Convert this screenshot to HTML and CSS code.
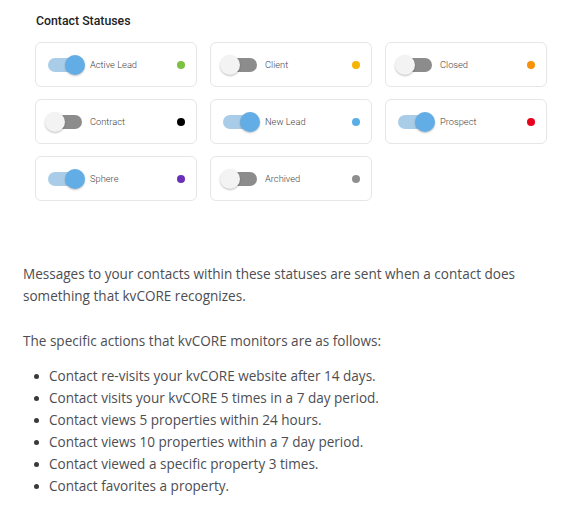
FILE: index.html
```html
<!DOCTYPE html>
<html>
<head>
<meta charset="utf-8">
<link rel="stylesheet" href="styles.css">
</head>
<body>
<div class="page">
  <section class="statuses">
    <h2 class="title">Contact Statuses</h2>
    <div class="grid">
      <div class="card"><span class="toggle on"><span class="knob"></span></span><span class="label">Active Lead</span><span class="dot" style="background:#7dc143"></span></div>
      <div class="card"><span class="toggle"><span class="knob"></span></span><span class="label">Client</span><span class="dot" style="background:#f5b400"></span></div>
      <div class="card"><span class="toggle"><span class="knob"></span></span><span class="label">Closed</span><span class="dot" style="background:#f7930a"></span></div>
      <div class="card"><span class="toggle"><span class="knob"></span></span><span class="label">Contract</span><span class="dot" style="background:#000000"></span></div>
      <div class="card"><span class="toggle on"><span class="knob"></span></span><span class="label">New Lead</span><span class="dot" style="background:#5aaee8"></span></div>
      <div class="card"><span class="toggle on"><span class="knob"></span></span><span class="label">Prospect</span><span class="dot" style="background:#e8001c"></span></div>
      <div class="card"><span class="toggle on"><span class="knob"></span></span><span class="label">Sphere</span><span class="dot" style="background:#6a30b8"></span></div>
      <div class="card"><span class="toggle"><span class="knob"></span></span><span class="label">Archived</span><span class="dot" style="background:#8f8f8f"></span></div>
    </div>
  </section>
  <section class="copy">
    <p>Messages to your contacts within these statuses are sent when a contact does something that kvCORE recognizes.</p>
    <p>The specific actions that kvCORE monitors are as follows:</p>
    <ul class="list">
      <li>Contact re-visits your kvCORE website after 14 days.</li>
      <li>Contact visits your kvCORE 5 times in a 7 day period.</li>
      <li>Contact views 5 properties within 24 hours.</li>
      <li>Contact views 10 properties within a 7 day period.</li>
      <li>Contact viewed a specific property 3 times.</li>
      <li>Contact favorites a property.</li>
    </ul>
  </section>
</div>
</body>
</html>
```
FILE: styles.css
```css
html, body {
  margin: 0;
  padding: 0;
  background: #ffffff;
}
.page {
  width: 573px;
}
.statuses {
  padding: 14px 0 0 35px;
}
.title {
  margin: 0 0 13px 1px;
  font-family: Roboto, "Liberation Sans", sans-serif;
  font-weight: 500;
  font-size: 12.3px;
  line-height: 15px;
  color: #222222;
}
.grid {
  display: grid;
  grid-template-columns: repeat(3, 162px);
  column-gap: 13px;
  row-gap: 12px;
}
.card {
  box-sizing: border-box;
  height: 45px;
  border: 1px solid #e6e6e6;
  border-radius: 6px;
  display: flex;
  align-items: center;
  padding: 0 11px 0 12px;
}
.toggle {
  position: relative;
  width: 34px;
  height: 14px;
  border-radius: 7px;
  background: #8c8c8c;
  flex: none;
}
.toggle .knob {
  position: absolute;
  top: -3px;
  left: -3px;
  width: 20px;
  height: 20px;
  border-radius: 50%;
  background: #f3f3f3;
  box-shadow: 0 1px 2px rgba(0,0,0,0.25);
}
.toggle.on {
  background: #a9cde8;
}
.toggle.on .knob {
  left: auto;
  right: -3px;
  background: #62ade6;
}
.label {
  flex: 1;
  margin-left: 8px;
  font-family: Roboto, "Liberation Sans", sans-serif;
  font-weight: 300;
  font-size: 9.3px;
  color: #3f3f3f;
}
.dot {
  width: 8px;
  height: 8px;
  border-radius: 50%;
  flex: none;
}
.copy {
  padding: 62px 20px 0 23px;
  font-family: "Open Sans", Lato, sans-serif;
  font-size: 13.55px;
  line-height: 22px;
  color: #4d4d52;
}
.copy p {
  margin: 0 0 23px 0;
}
.list {
  list-style: none;
  margin: -10px 0 0 0;
  padding: 0;
}
.list li {
  position: relative;
  padding-left: 26px;
  line-height: 22px;
}
.list li::before {
  content: "";
  position: absolute;
  left: 11px;
  top: 9px;
  width: 5px;
  height: 5px;
  border-radius: 50%;
  background: #3a3a3a;
}
```
